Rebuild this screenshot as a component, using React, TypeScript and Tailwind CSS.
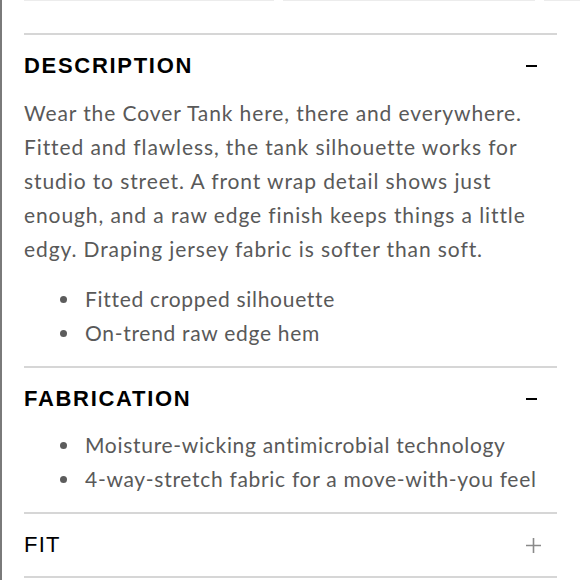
import React from 'react'

const DESCRIPTION = [
  'Wear the Cover Tank here, there and everywhere.',
  'Fitted and flawless, the tank silhouette works for',
  'studio to street. A front wrap detail shows just',
  'enough, and a raw edge finish keeps things a little',
  'edgy. Draping jersey fabric is softer than soft.',
]

function Bullets({ items }: { items: string[] }) {
  return (
    <ul className="flex flex-col tracking-[0.7px]">
      {items.map((t) => (
        <li key={t} className="flex items-center h-[34px]">
          <span className="ml-[36px] w-[7px] h-[7px] rounded-full bg-[#5c5c5c]" />
          <span className="ml-[18px]">{t}</span>
        </li>
      ))}
    </ul>
  )
}

function Minus() {
  return <span className="block w-[11px] h-[2px] bg-black mr-[20px]" />
}

function Plus() {
  return (
    <svg width="15" height="15" viewBox="0 0 15 15" className="mr-[16px]">
      <path d="M7.5 0v15M0 7.5h15" stroke="#8a8a8a" strokeWidth="1.6" />
    </svg>
  )
}

export default function App() {
  return (
    <div className="w-[580px] h-[580px] bg-white overflow-hidden flex">
      <div className="flex-1 border-l-2 border-[#7a7a7a] flex flex-col">
        {/* faint edge of the thumbnails above */}
        <div className="flex h-px gap-[9px] pl-[22px]">
          <div className="w-[250px] bg-[#ececec]" />
          <div className="w-[252px] bg-[#ececec]" />
          <div className="flex-1 bg-[#ececec]" />
        </div>

        <div className="pl-[22px] pr-[23px] pt-[32px] text-[#595959] text-[21px] leading-[34px] tracking-[0.9px]" style={{ fontFamily: 'Lato, "Open Sans", sans-serif' }}>
          <div className="h-[2px] bg-[#d6d6d6]" />
          <div className="h-[62px] flex items-center justify-between">
            <h2 className="text-black text-[22px] font-bold tracking-[1.7px] leading-none" style={{ fontFamily: '"Liberation Sans", Arial, sans-serif' }}>DESCRIPTION</h2>
            <Minus />
          </div>
          <div className="-mt-px">
            {DESCRIPTION.map((l) => (
              <p key={l}>{l}</p>
            ))}
          </div>
          <div className="mt-[16px] mb-[16px]">
            <Bullets items={['Fitted cropped silhouette', 'On-trend raw edge hem']} />
          </div>

          <div className="h-[2px] bg-[#d6d6d6]" />
          <div className="h-[62px] flex items-center justify-between">
            <h2 className="text-black text-[22px] font-bold tracking-[1.7px] leading-none" style={{ fontFamily: '"Liberation Sans", Arial, sans-serif' }}>FABRICATION</h2>
            <Minus />
          </div>
          <div className="-mt-[2px] mb-[16px]">
            <Bullets items={['Moisture-wicking antimicrobial technology', '4-way-stretch fabric for a move-with-you feel']} />
          </div>

          <div className="h-[2px] bg-[#d6d6d6]" />
          <div className="h-[62px] flex items-center justify-between">
            <h2 className="text-black text-[22px] tracking-[1.2px] leading-none" style={{ fontFamily: '"Liberation Sans", Arial, sans-serif' }}>FIT</h2>
            <Plus />
          </div>
          <div className="h-[2px] bg-[#d6d6d6]" />
        </div>
      </div>
    </div>
  )
}
